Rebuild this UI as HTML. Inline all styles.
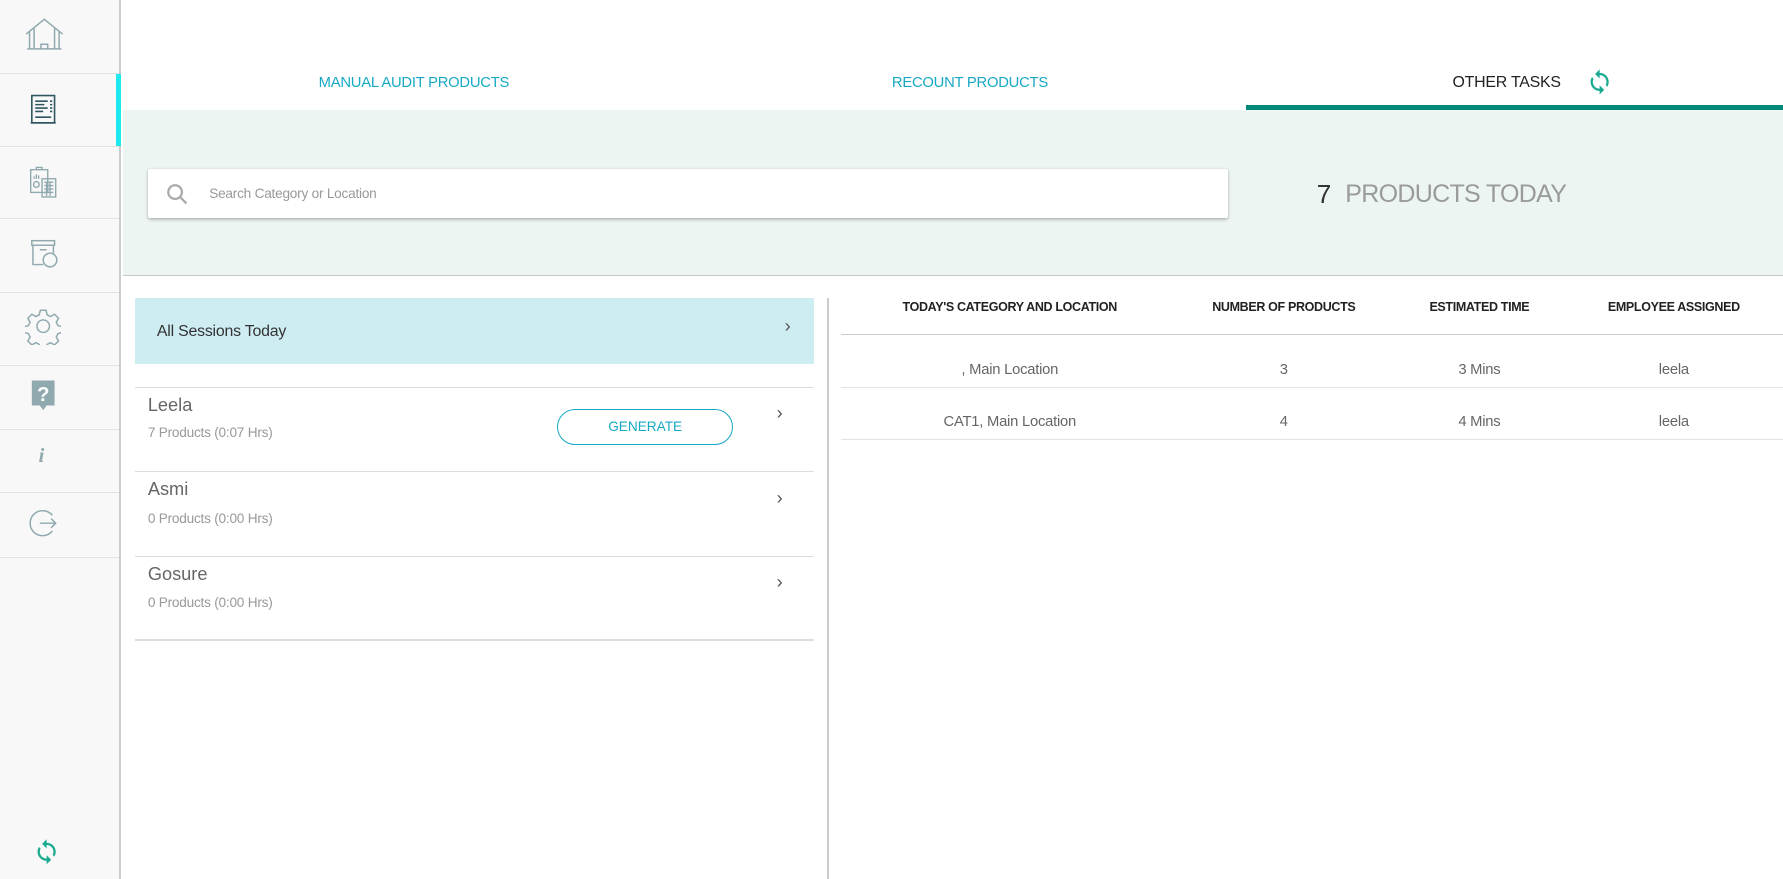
<!DOCTYPE html>
<html><head><meta charset="utf-8"><style>
html,body{margin:0;padding:0;width:1783px;height:879px;overflow:hidden;background:#fff;font-family:"Liberation Sans",sans-serif}
#w{position:relative;width:1568px;height:773px;zoom:1.13712;overflow:hidden}
.a{position:absolute}
.sb{left:0;top:0;width:105px;height:773px;background:#f8f8f8;border-right:2px solid #ccc}
.sep{left:0;width:105px;height:1px;background:#e2e2e2}
.ic{left:22px;width:32px;height:32px}
.tab{top:66px;font-size:13px;color:#17a9c4;text-align:center;letter-spacing:-0.2px}
.hd{top:264px;font-size:11px;font-weight:bold;color:#222;text-align:center;letter-spacing:-0.3px}
.td{font-size:13px;color:#666;text-align:center;letter-spacing:-0.2px}
.chev{font-size:16px;color:#555}
</style></head><body><div id="w">
<div class="a sb"></div>
<div class="a sep" style="top:64px"></div><div class="a sep" style="top:128px"></div><div class="a sep" style="top:192px"></div><div class="a sep" style="top:257px"></div><div class="a sep" style="top:321px"></div><div class="a sep" style="top:377px"></div><div class="a sep" style="top:433px"></div><div class="a sep" style="top:490px"></div>
<div class="a" style="left:102px;top:65px;width:4px;height:63px;background:#1de9f0"></div>
<svg class="a" style="left:22px;top:15px" width="34" height="32" viewBox="0 0 34 32" fill="none" stroke="#8fa9ae" stroke-width="1.3"><path d="M1 15L17 2L33 15M4 13V28H30V13M14 28V24H20V28M2 28H32M8 10V28M26 10V28"/></svg>
<svg class="a ic" style="top:80px" viewBox="0 0 32 32" fill="none" stroke="#2e5560" stroke-width="1.4"><rect x="6" y="4" width="20" height="24"/><path d="M9 9H20M9 12H17M9 15H20M9 18H16M22 9h2M22 12h2M22 15h2M22 18h2M9 23H23M5 28H27"/></svg>
<svg class="a ic" style="top:144px" viewBox="0 0 32 32" fill="none" stroke="#8fa9ae" stroke-width="1.2"><rect x="5" y="5" width="15" height="20"/><path d="M10 5V3H15V5M8 13V11M10 13V9M12 13V10"/><circle cx="10" cy="18" r="2.5"/><rect x="15" y="13" width="12" height="16"/><path d="M17 16H25M17 19H25M17 22H25M17 25H25M19 16V28M22 16V28"/></svg>
<svg class="a ic" style="top:207px" viewBox="0 0 32 32" fill="none" stroke="#8fa9ae" stroke-width="1.3"><rect x="6" y="5" width="20" height="4"/><path d="M7 9V26H16M25 9V16M13 13H19"/><circle cx="22" cy="22" r="6"/></svg>
<svg class="a ic" style="top:271px" viewBox="0 0 32 32" fill="none" stroke="#8fa9ae" stroke-width="1.3"><path d="M13.5 2h5l1 4 3 1.5 3.5-2 3.5 3.5-2 3.5 1.5 3 4 1v5l-4 1-1.5 3 2 3.5-3.5 3.5-3.5-2-3 1.5-1 4h-5l-1-4-3-1.5-3.5 2-3.5-3.5 2-3.5-1.5-3-4-1v-5l4-1 1.5-3-2-3.5 3.5-3.5 3.5 2 3-1.5z"/><circle cx="16" cy="16" r="5.5"/></svg>
<svg class="a ic" style="top:331px" viewBox="0 0 32 32"><path d="M6 4H26V26H19L16 30L13 26H6Z" fill="#8fa9ae"/><text x="16" y="22" font-size="18" font-weight="bold" fill="#fff" text-anchor="middle" font-family="Liberation Sans">?</text></svg>
<div class="a" style="left:34px;top:391px;font-size:18px;font-style:italic;font-weight:bold;color:#8fa9ae;font-family:'Liberation Serif',serif">i</div>
<svg class="a ic" style="top:444px" viewBox="0 0 32 32" fill="none" stroke="#8fa9ae" stroke-width="1.3"><path d="M24 9A11 11 0 1 0 24 23M13 16H27M23 12L27 16L23 20"/></svg>
<svg class="a" style="left:29px;top:736px" width="24" height="26" viewBox="0 0 24 24" fill="#1aaa8f"><path d="M12 4V1L8 5l4 4V6c3.3 0 6 2.7 6 6 0 1-.25 1.97-.7 2.8l1.46 1.46C19.54 15.03 20 13.57 20 12c0-4.42-3.58-8-8-8zm0 14c-3.3 0-6-2.7-6-6 0-1 .25-1.97.7-2.8L5.24 7.74C4.46 8.97 4 10.43 4 12c0 4.42 3.58 8 8 8v3l4-4-4-4v3z"/></svg>

<div class="a tab" style="left:108px;width:512px">MANUAL AUDIT PRODUCTS</div>
<div class="a tab" style="left:602px;width:502px">RECOUNT PRODUCTS</div>
<div class="a tab" style="left:1230px;width:190px;color:#222;font-size:14px;top:65px">OTHER TASKS</div>
<svg class="a" style="left:1395px;top:58px" width="24" height="28" viewBox="0 0 24 24" fill="#1aaa8f"><path d="M12 4V1L8 5l4 4V6c3.3 0 6 2.7 6 6 0 1-.25 1.97-.7 2.8l1.46 1.46C19.54 15.03 20 13.57 20 12c0-4.42-3.58-8-8-8zm0 14c-3.3 0-6-2.7-6-6 0-1 .25-1.97.7-2.8L5.24 7.74C4.46 8.97 4 10.43 4 12c0 4.42 3.58 8 8 8v3l4-4-4-4v3z"/></svg>
<div class="a" style="left:1096px;top:92px;width:472px;height:5px;background:#00897b"></div>
<div class="a" style="left:108px;top:97px;width:1460px;height:145px;background:#edf5f3;border-bottom:1px solid #c8c8c8"></div>
<div class="a" style="left:130px;top:149px;width:950px;height:43px;background:#fff;border-radius:2px;box-shadow:0 1px 3px rgba(0,0,0,.3)"></div>
<svg class="a" style="left:146px;top:161px" width="20" height="20" viewBox="0 0 20 20" fill="none" stroke="#aaa" stroke-width="2"><circle cx="8" cy="8" r="6"/><path d="M12.5 12.5L18 18"/></svg>
<div class="a" style="left:184px;top:164px;font-size:12px;color:#999;letter-spacing:-0.2px">Search Category or Location</div>
<div class="a" style="left:1158px;top:157px;font-size:23px;color:#333">7</div>
<div class="a" style="left:1183px;top:158px;font-size:22px;color:#9a9a9a;letter-spacing:-0.6px">PRODUCTS TODAY</div>

<div class="a" style="left:119px;top:262px;width:597px;height:58px;background:#cdedf2"></div>
<div class="a" style="left:138px;top:284px;font-size:14px;color:#333;letter-spacing:-0.2px">All Sessions Today</div>
<div class="a chev" style="left:690px;top:278px">›</div>
<div class="a" style="left:119px;top:340px;width:597px;height:1px;background:#ddd"></div>
<div class="a" style="left:119px;top:414px;width:597px;height:1px;background:#ddd"></div>
<div class="a" style="left:119px;top:489px;width:597px;height:1px;background:#ddd"></div>
<div class="a" style="left:119px;top:562px;width:597px;height:2px;background:#ddd"></div>
<div class="a" style="left:130px;top:347px;font-size:16px;color:#666">Leela</div>
<div class="a" style="left:130px;top:374px;font-size:12px;color:#999;letter-spacing:-0.2px">7 Products (0:07 Hrs)</div>
<div class="a" style="left:490px;top:360px;width:153px;height:30px;border:1px solid #17a9c4;border-radius:16px;text-align:center;line-height:30px;font-size:12px;color:#17a9c4">GENERATE</div>
<div class="a chev" style="left:683px;top:354px">›</div>
<div class="a" style="left:130px;top:421px;font-size:16px;color:#666">Asmi</div>
<div class="a" style="left:130px;top:449px;font-size:12px;color:#999;letter-spacing:-0.2px">0 Products (0:00 Hrs)</div>
<div class="a chev" style="left:683px;top:429px">›</div>
<div class="a" style="left:130px;top:496px;font-size:16px;color:#666">Gosure</div>
<div class="a" style="left:130px;top:523px;font-size:12px;color:#999;letter-spacing:-0.2px">0 Products (0:00 Hrs)</div>
<div class="a chev" style="left:683px;top:503px">›</div>

<div class="a" style="left:727px;top:262px;width:2px;height:511px;background:#ccc"></div>
<div class="a hd" style="left:788px;width:200px">TODAY'S CATEGORY AND LOCATION</div>
<div class="a hd" style="left:1049px;width:160px">NUMBER OF PRODUCTS</div>
<div class="a hd" style="left:1231px;width:140px">ESTIMATED TIME</div>
<div class="a hd" style="left:1397px;width:150px">EMPLOYEE ASSIGNED</div>
<div class="a" style="left:740px;top:294px;width:828px;height:1px;background:#ccc"></div>
<div class="a" style="left:740px;top:340px;width:828px;height:1px;background:#e3e3e3"></div>
<div class="a" style="left:740px;top:386px;width:828px;height:1px;background:#e3e3e3"></div>
<div class="a td" style="left:788px;width:200px;top:318px">, Main Location</div>
<div class="a td" style="left:1079px;width:100px;top:318px">3</div>
<div class="a td" style="left:1251px;width:100px;top:318px">3 Mins</div>
<div class="a td" style="left:1422px;width:100px;top:318px">leela</div>
<div class="a td" style="left:788px;width:200px;top:364px">CAT1, Main Location</div>
<div class="a td" style="left:1079px;width:100px;top:364px">4</div>
<div class="a td" style="left:1251px;width:100px;top:364px">4 Mins</div>
<div class="a td" style="left:1422px;width:100px;top:364px">leela</div>
</div></body></html>
